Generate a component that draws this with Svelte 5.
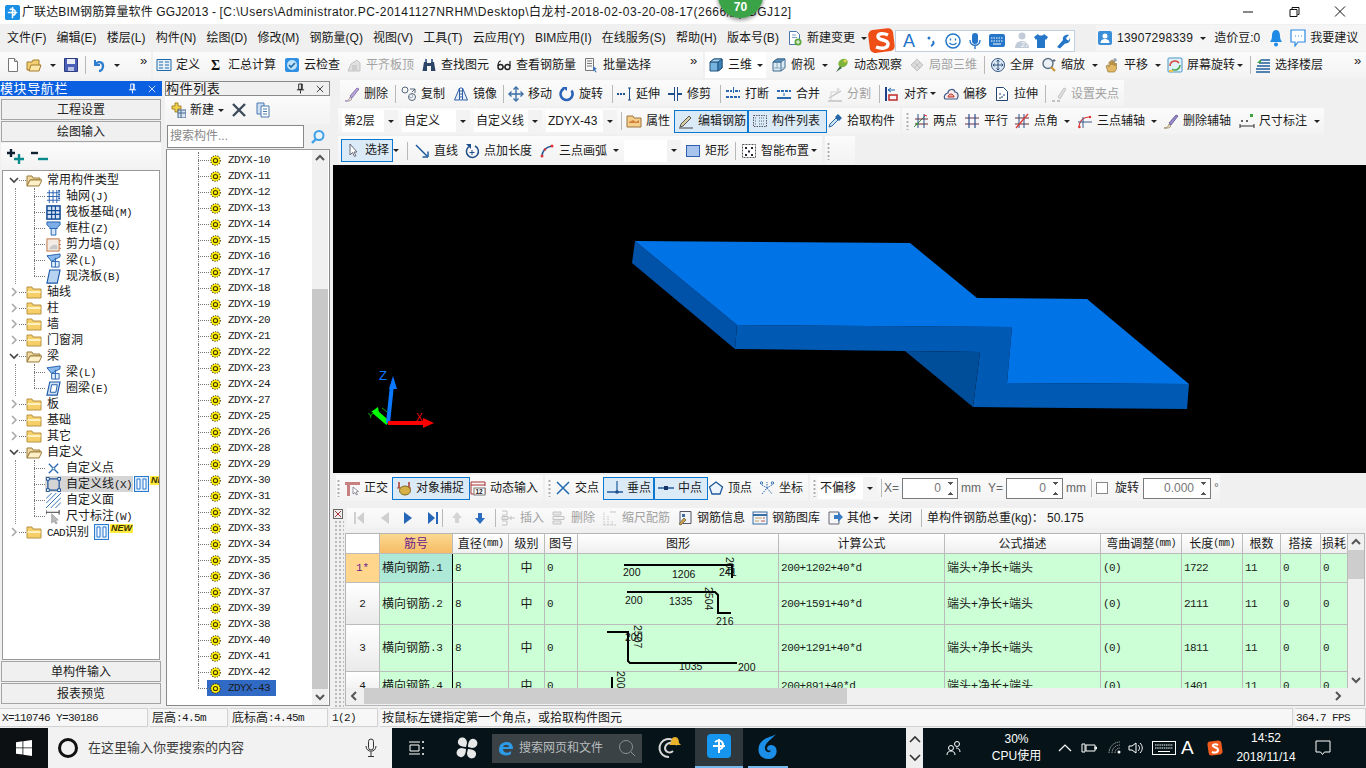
<script>
  // icon bodies, 16x16
  const ic = {
    new: '<path d="M3.500 1.500h6l3 3v10h-9z" fill="#fff" stroke="#777"/><path d="M9.500 1.500v3h3" fill="#ddd" stroke="#777"/>',
    open: '<path d="M1 5h5l1-2h6v10H1z" fill="#f3cf74" stroke="#a57c2a"/><path d="M3 14l2-6h10l-2 6z" fill="#fbe6a8" stroke="#a57c2a"/>',
    save: '<path d="M1.500 1.500h13v13h-13z" fill="#4a5fb5" stroke="#2c3a80"/><path d="M4 2h8v5H4z" fill="#e8ecf8"/><path d="M5 10h6v4H5z" fill="#b8c2e4"/>',
    undo: '<path d="M4 3v5h5" fill="none" stroke="#2f7fd0" stroke-width="2"/><path d="M4 8c2-4 8-4 8 1 0 3-2 5-4 5" fill="none" stroke="#2f7fd0" stroke-width="2.400"/>',
    def: '<path d="M1 2.500h14v11H1z" fill="#e6f0fb" stroke="#1f6aa8"/><path d="M3 5h4M3 8h4M3 11h4M9 5h4M9 8h4M9 11h4" stroke="#1f6aa8"/>',
    sum: '<text x="3" y="13" font-size="14" font-weight="700" font-family="Liberation Serif" fill="#111">Σ</text>',
    cloud: '<rect x="1" y="1" width="14" height="14" rx="2" fill="#2f8fe0"/><circle cx="8" cy="8" r="5" fill="#bfe2fb"/><path d="M5 8l2 2 4-4" fill="none" stroke="#1f6aa8" stroke-width="1.600"/>',
    flat: '<path d="M2 14l3-7 6-4 3 3v8z" fill="#ddd" stroke="#bbb"/><path d="M6 8h5v6H6z" fill="#c8c8c8"/>',
    find: '<path d="M3 5h3v9H1.500zM10 5h3l1.500 9H10z" fill="#2c4468"/><path d="M4 2h2v3H4zM10 2h2v3h-2z" fill="#53739d"/><path d="M6 6h4v3H6z" fill="#2c4468"/>',
    see: '<circle cx="4.500" cy="10" r="2.500" fill="none" stroke="#222" stroke-width="1.400"/><circle cx="11.500" cy="10" r="2.500" fill="none" stroke="#222" stroke-width="1.400"/><path d="M7 10h2M2 9c0-3 1-5 3-5M14 9V4" stroke="#222" fill="none" stroke-width="1.200"/>',
    batch: '<path d="M2.500 1.500h8v12h-8z" fill="#f6f6f6" stroke="#777"/><path d="M4 4h5M4 6.500h5M4 9h5" stroke="#777"/><path d="M10 9l4 3-2 .5 1.500 2.500-1 .5-1.500-2.500-1 1.500z" fill="#3c6eb4"/>',
    cube: '<path d="M2 5l4-3h8v9l-4 3H2z" fill="#75b4df" stroke="#24557f"/><path d="M2 5h8v9" fill="none" stroke="#24557f"/><path d="M10 5l4-3v9l-4 3z" fill="#3d85b9" stroke="#24557f"/><path d="M2 5l4-3h8l-4 3z" fill="#a8d3ee" stroke="#24557f"/>',
    top: '<path d="M2 5l4-3h8v9l-4 3H2z" fill="#dceaf4" stroke="#3c6a90"/><path d="M2 5h8v9" fill="none" stroke="#3c6a90"/><path d="M6 2v9H2M6 11l8 0" fill="none" stroke="#8ab"/><path d="M2 5l4-3h8l-4 3z" fill="#5f93bb" stroke="#3c6a90"/>',
    orbit: '<ellipse cx="9" cy="6" rx="5" ry="4" fill="#7fb43c" transform="rotate(-35 9 6)"/><path d="M2 15l4-6 2 2z" fill="#3c6a4a"/><circle cx="11" cy="4" r="1.500" fill="#e9d64e"/>',
    local: '<path d="M2 8l6-6 6 6-6 6z" fill="#d6d6d6" stroke="#bbb"/><path d="M5 5l6 6M8 2v0M11 5l-6 6" stroke="#bbb"/>',
    full: '<circle cx="8" cy="8" r="6.500" fill="#dce8f7" stroke="#33557d"/><path d="M8 3v10M3 8h10" stroke="#33557d"/><path d="M6.500 4.500L8 3l1.500 1.500M6.500 11.500L8 13l1.500-1.500M4.500 6.500L3 8l1.500 1.500M11.500 6.500L13 8l-1.500 1.500" fill="none" stroke="#33557d"/>',
    zoom: '<circle cx="7" cy="6.500" r="5" fill="#eaf0f6" stroke="#5b6f86" stroke-width="1.400"/><path d="M10 10l4 4" stroke="#c99a3a" stroke-width="2.400"/><path d="M13 2v3M11.500 3.500h3" stroke="#567"/>',
    pan: '<path d="M4 15l-2-6 2-1 1 2V5l1.500-.5L7 8V3.500L8.500 3 9 8V4.500L10.500 4.500 11 9V6.500l1.500 0V12l-2 3z" fill="#e2b766" stroke="#8a6a2a" stroke-width=".6"/><path d="M11 1v4M9 3h4" stroke="#789"/>',
    rot: '<rect x="1" y="1" width="14" height="14" rx="1" fill="#dff1fb" stroke="#4e94c6"/><path d="M3 9a5 5 0 0 1 9-3" fill="none" stroke="#d8473a" stroke-width="1.500"/><path d="M13 8a5 5 0 0 1-8 4" fill="none" stroke="#48a848" stroke-width="1.500"/><path d="M2 13h4v2H2z" fill="#f0c24c"/>',
    floor: '<path d="M6 3h9M4 6h11M2 9h13M1 12h14M1 15h14" stroke="#1e5e9c" stroke-width="1.600"/><path d="M6 2L2 6l4 0" fill="#3c9e4a"/>',
    del: '<path d="M1 15c3 0 4-1 5-4l2 2c-1 2-4 2.500-7 2z" fill="#e8e0c8" stroke="#7c6a9a" stroke-width=".6"/><path d="M6 10l7-8 2 1-7 9z" fill="#b9a5d8" stroke="#6a5598" stroke-width=".7"/>',
    copy: '<circle cx="4" cy="4" r="3" fill="none" stroke="#55657a"/><circle cx="11" cy="11" r="3.500" fill="none" stroke="#55657a"/><circle cx="10" cy="10" r="1.800" fill="none" stroke="#9ab"/><path d="M9 3h5v4M14 3l-3 3" fill="none" stroke="#55657a"/>',
    mirror: '<path d="M6.500 2L1.500 14h5zM9.500 2l5 12h-5z" fill="#e6eef9" stroke="#2f60a8"/><path d="M8 1v14" stroke="#2f60a8" stroke-dasharray="2 1"/>',
    move: '<path d="M8 1v14M1 8h14" stroke="#3a6ea5" stroke-width="1.400"/><path d="M5.500 3.500L8 1l2.500 2.500M5.500 12.500L8 15l2.500-2.500M3.500 5.500L1 8l2.500 2.500M12.500 5.500L15 8l-2.500 2.500" fill="none" stroke="#3a6ea5" stroke-width="1.400"/>',
    rotate: '<path d="M12.500 4.500A6 6 0 1 1 5 2.500" fill="none" stroke="#2a62b8" stroke-width="2.600"/><path d="M3 1h5v4z" fill="#2a62b8"/>',
    extend: '<path d="M1 8h9" stroke="#1f4f8a" stroke-dasharray="2 1" stroke-width="2"/><path d="M12 2h3M12 14h3M13.500 2v12" stroke="#1f4f8a"/>',
    trim: '<path d="M1 8h6M10 8h5" stroke="#1f4f8a" stroke-width="2"/><path d="M7.500 1v14M10.500 1v14" stroke="#1f4f8a"/>',
    break: '<path d="M1 5h6M10 5h5M1 11h14" stroke="#2a6ab0" stroke-width="2" stroke-dasharray="3 1"/><path d="M8.500 1v6" stroke="#2a6ab0"/>',
    merge: '<path d="M1 5h14" stroke="#2a6ab0" stroke-width="2" stroke-dasharray="3 1"/><path d="M1 12h14" stroke="#2a6ab0" stroke-width="2"/><path d="M8 7v3" stroke="#2a6ab0"/>',
    split: '<path d="M1 15h14M2 12l12-7" stroke="#bbb" stroke-width="1.400"/><path d="M4 14V6h8" fill="none" stroke="#ccc"/><path d="M10 2l3 1-3 4z" fill="#d4d4d4"/>',
    align: '<path d="M2 1v14" stroke="#1f3f8a" stroke-width="2"/><path d="M5 9h8v5H5z" fill="none" stroke="#c0282a" stroke-width="1.500"/><path d="M4 4h7M4 4l3-2M4 4l3 2" stroke="#1f6ab0" fill="none"/>',
    offset: '<path d="M2 13c-2-3 1-6 3-6 0-4 6-5 7-1 3 0 4 4 2 7z" fill="#fbeaea" stroke="#3b5a8a" stroke-width="1.200"/><path d="M5 11c0-2 2-3 3-3s3 1 3 3z" fill="#e9a7a0" stroke="#c0392b"/>',
    stretch: '<path d="M2.500 1.500h7l4 4v9h-11z" fill="#fff" stroke="#25456e"/><path d="M6 7v2M8 10v2M10 8v2M5 12h2" stroke="#25456e"/>',
    grip2: '<path d="M1 15h3M6 15h3" stroke="#bbb" stroke-width="2"/><path d="M7 11l6-9 2 1-6 10z" fill="#ddd" stroke="#bbb"/>',
    attr: '<path d="M1 3h6l1 2h7v9H1z" fill="#f3cf8b" stroke="#a0743a"/><path d="M3 9l4-2 3 2 3-2v3H3z" fill="#d2803c"/>',
    edit: '<path d="M2 14l1-3 8-8 2 2-8 8z" fill="#d9d0a8" stroke="#555"/><path d="M1 15h14" stroke="#444"/>',
    list: '<path d="M1.500 2.500h13v11h-13z" fill="none" stroke="#556" stroke-dasharray="1.500 1"/><path d="M3 5h2M3 8h2M3 11h2M7 5h6M7 8h6M7 11h6" stroke="#567" stroke-dasharray="1 1"/>',
    pick: '<path d="M2 14l1-3 6-6 2 2-6 6z" fill="#cfe4f6" stroke="#2868a8"/><path d="M8 4l3-3 4 4-3 3z" fill="#2868a8"/>',
    two: '<path d="M1 14L13 2" stroke="#3c9040"/><path d="M2 6h13M2 11h13" stroke="#6a2f2f"/><path d="M5 1v14M11 1v14" stroke="#2a4f8a"/><circle cx="4" cy="11" r="1.300" fill="#3c9040"/><path d="M11 2l3 1" stroke="#d33"/>',
    para: '<path d="M1 5h14M1 11h14" stroke="#6a2f4f" stroke-width="1.200"/><path d="M5 1v14M11 1v14" stroke="#2a4f8a" stroke-width="1.200"/>',
    ang: '<path d="M1 5h14M1 11h14" stroke="#6a2f2f"/><path d="M5 1v14M10 1v14" stroke="#2a4f8a"/><path d="M2 15L14 1" stroke="#d33" stroke-width="1.200"/>',
    arc3: '<path d="M2 15c0-7 4-11 11-11" fill="none" stroke="#d33" stroke-width="1.200"/><path d="M6 15V4M1 9h14" stroke="#3a5a8a"/><circle cx="2.500" cy="14" r="1.200" fill="#d33"/><circle cx="13" cy="4" r="1.200" fill="#d33"/>',
    delax: '<path d="M1 15c3 0 4-1 5-4l2 2c-1 2-4 2.500-7 2z" fill="#e8e0c8" stroke="#7c6a3a" stroke-width=".6"/><path d="M6 10l7-8 2 1-7 9z" fill="#9a8cc8" stroke="#4a3f88" stroke-width=".7"/>',
    dim: '<path d="M1 11v4M15 11v4M1 13h14" stroke="#333"/><circle cx="3" cy="8" r="1" fill="#333"/><circle cx="8" cy="8" r="1" fill="#333"/><rect x="11" y="1" width="3" height="3" fill="#3ba53b"/>',
    sel: '<path d="M5 2v11l2.500-2.500 2 4 1.500-.8-2-3.700H12z" fill="#fff" stroke="#667"/>',
    line: '<path d="M2 2l11 11" stroke="#1f5a9c" stroke-width="1.500"/><path d="M14 14H8.500M14 14V8.500" stroke="#1f5a9c" stroke-width="1.500"/>',
    ptlen: '<path d="M11 3a6 6 0 1 1-6 .5" fill="none" stroke="#1f4f8a" stroke-width="1.500"/><path d="M2 1h5v5z" fill="#1f4f8a"/><path d="M8 7v5M5.500 9.500h5" stroke="#1f4f8a"/>',
    arc: '<path d="M3 14c0-6 4-10 10-11" fill="none" stroke="#1f5a9c" stroke-width="1.500"/><circle cx="3" cy="13" r="1.500" fill="#d33"/><circle cx="13" cy="3" r="1.500" fill="#d33"/><circle cx="6" cy="6.500" r="1.200" fill="#d33"/>',
    rect: '<rect x="1.500" y="2.500" width="13" height="11" fill="#a9c4ec" stroke="#2e5fb0"/>',
    smart: '<path d="M1.500 1.500h13v13h-13z" fill="#fff" stroke="#555" stroke-dasharray="2 1"/><path d="M4 4h2v2H4zM10 4h2v2h-2zM7 7.500h2v2H7zM4 11h2v2H4zM10 11h2v2h-2z" fill="#223"/>',
    ortho: '<path d="M1 2h15v3H1z" fill="#c98080"/><path d="M3 4h3v12H3z" fill="#c98080"/><path d="M9 7v7l2-1.500 1.500 2.500 1-.5-1.500-2.500 2.500-.5z" fill="#fff" stroke="#667" stroke-width=".7"/>',
    snap: '<path d="M1 8h14" stroke="#b03a2a"/><path d="M3 2v6M13 2v6" stroke="#b03a2a" stroke-width="1.500"/><ellipse cx="9" cy="10.500" rx="5.500" ry="4.500" fill="#d6b048" stroke="#806a20"/>',
    dyn: '<path d="M1 2h14v4M1 2v12h14V8" fill="none" stroke="#a33"/><path d="M1 5h14" stroke="#a33"/><rect x="4" y="8" width="11" height="7" fill="#fff" stroke="#777"/><text x="5.500" y="14" font-size="6.500" font-family="Liberation Sans" font-weight="700" fill="#222">12</text>',
    cross: '<path d="M2 2l12 12M14 2L2 14" stroke="#1f6ab0" stroke-width="1.500"/>',
    perp: '<path d="M0 12h16" stroke="#1f5a9c" stroke-width="1.500"/><path d="M10 1v11" stroke="#1f5a9c" stroke-width="1.200"/><circle cx="10" cy="12" r="1.800" fill="#1f4f8a"/>',
    mid: '<path d="M0 8h16" stroke="#1f5a9c" stroke-width="1.500"/><rect x="6" y="6" width="4" height="4" fill="#14366a"/>',
    vert: '<path d="M8 2l6.500 5-2.500 7H4L1.500 7z" fill="#eef4fc" stroke="#1f5a9c" stroke-width="1.300"/>',
    coord: '<path d="M3 14l5-6 5 6M8 8V2M3 5l5 3 5-3" fill="none" stroke="#2a6ab0" stroke-dasharray="1.500 1"/><circle cx="2.500" cy="3" r="1.200" fill="none" stroke="#2a6ab0"/><circle cx="13.500" cy="3" r="1.200" fill="none" stroke="#2a6ab0"/>',
    first: '<path d="M3 2h2v12H3zM13 2v12L6 8z" fill="#c8c8c8"/>',
    prev: '<path d="M12 2v12L4 8z" fill="#c8c8c8"/>',
    next: '<path d="M4 2v12l8-6z" fill="#2566b8"/>',
    last: '<path d="M11 2h2v12h-2zM3 2v12l7-6z" fill="#2566b8"/>',
    up: '<path d="M8 2l5 6h-3v5H6V8H3z" fill="#cfcfcf"/>',
    down: '<path d="M8 14l5-6h-3V3H6v5H3z" fill="#2e6ec0"/>',
    ins: '<path d="M2 1h5v4H2M2 11h5v4H2" fill="none" stroke="#bbb"/><path d="M7 8h8M11 6v4" stroke="#bbb"/><path d="M2 6.500h6v3H2z" fill="#e4e4e4" stroke="#bbb"/>',
    delr: '<path d="M2 2h8v3H2zM2 11h8v3H2z" fill="#e8e8e8" stroke="#bbb"/><path d="M2 6.500h11v3H2z" fill="#f2f2f2" stroke="#bbb"/>',
    scale: '<path d="M2 15V2M6 15V5M10 15v-4M14 15h-13" stroke="#bbb" stroke-dasharray="1.500 1"/><path d="M8 2h6" stroke="#bbb"/>',
    info: '<path d="M3 1.500h11v12H3z" fill="#f0f3f7" stroke="#556"/><path d="M5 4h3v3H5z" fill="#446a9a"/><path d="M2 14l5-6 2 2-5 5z" fill="#d6a248" stroke="#775"/>',
    lib: '<rect x="1" y="2" width="14" height="12" fill="#eef3f9" stroke="#3a6ea5"/><path d="M1 5h14" stroke="#3a6ea5" stroke-width="2"/><path d="M3 8h7M3 11h4" stroke="#c9a35a"/><path d="M11 8h2M9 11h4" stroke="#c05a4a"/>',
    other: '<path d="M2 2h10v12H2z" fill="#f5f5f5" stroke="#667"/><path d="M7 5h4V2l5 5-5 5V9H7z" fill="#3a7cc4"/>',
    user: '<rect x="1" y="1" width="14" height="14" rx="2" fill="#3a8fd8"/><circle cx="8" cy="6" r="2.500" fill="#fff"/><path d="M3.500 13c0-3 2-4 4.500-4s4.500 1 4.500 4z" fill="#fff"/>',
    change: '<path d="M2.500 1.500h7l3 3v10h-10z" fill="#fff" stroke="#4a78ac"/><path d="M5 5h4M5 7.500h5" stroke="#7a9cc4"/><circle cx="11" cy="12" r="3.500" fill="#5ca83c"/><path d="M9 12h4M11 10v4" stroke="#fff"/>',
    newitem: '<path d="M5 1h3v3h3v3H8v3H5V7H2V4h3z" fill="#f1d04a" stroke="#a8842a"/><rect x="8" y="8" width="8" height="8" fill="#d7e3f2" stroke="#44668e"/><path d="M8 11h8M11 8v8" stroke="#44668e"/>',
    xdel: '<path d="M2 2l12 12M14 2L2 14" stroke="#3c4a5a" stroke-width="2.400"/>',
    dupe: '<path d="M2 1h7v11H2z" fill="#cfe0f4" stroke="#4a78b0"/><path d="M6 4h8v11H6z" fill="#fff" stroke="#4a78b0"/><path d="M8 7h4M8 9.500h4M8 12h4" stroke="#4a78b0"/>'
  };

  const treeIcons = {
    grid: '<path d="M1 4h14M1 8h14M1 12h14M3.500 1v14M7.500 1v14M11.500 1v14" stroke="#2860b0" fill="none"/><path d="M13 1h2v2h-2zM13 5h2v2h-2zM13 9h2v2h-2z" fill="#2860b0"/>',
    raft: '<rect x="1" y="1" width="14" height="14" fill="#d5e4f6" stroke="#124a94" stroke-width="1.600"/><path d="M1 6h14M1 10h14M6 1v14M10 1v14" stroke="#124a94" stroke-width="1.200"/>',
    col: '<path d="M1 1h14v3l-3 3v1H4V7L1 4z" fill="#7eaee6" stroke="#2060b0"/><path d="M5.500 8h5v7h-5z" fill="#d5e6f8" stroke="#2060b0"/>',
    wall: '<rect x="1" y="2" width="13" height="13" fill="#f3ebe4" stroke="#c0703a"/><path d="M3 13c2-4 6-6 9-4v4z" fill="#c8c8c8"/><path d="M14 4h2M14 8h2M14 12h2" stroke="#c0703a"/>',
    beam: '<path d="M1 3l14-2v3L6 9z" fill="#8ab8ea" stroke="#2060b0"/><path d="M6 9h8v6H6z" fill="#e2eefa" stroke="#2060b0"/><path d="M10 5v10" stroke="#2060b0"/>',
    slab: '<path d="M4 1h11l-3 14H1z" fill="#b7d3f2" stroke="#1a56a8" stroke-width="1.200"/>',
    ring: '<path d="M4 1h11l-3 14H1z" fill="#cfe2f6" stroke="#1a56a8" stroke-width="1.200"/><path d="M6 4h6l-1.500 8H4.500z" fill="#fff" stroke="#1a56a8"/>',
    pt: '<path d="M3 3l10 10M13 3L3 13" stroke="#2a6ab0" stroke-width="1.400"/><circle cx="8" cy="8" r="1.300" fill="#fff" stroke="#2a6ab0"/>',
    lineb: '<rect x="2" y="2" width="12" height="12" fill="none" stroke="#124a94" stroke-width="1.200"/><path d="M.5 .5h3v3h-3zM12.500 .5h3v3h-3zM.5 12.500h3v3h-3zM12.500 12.500h3v3h-3z" fill="#fff" stroke="#124a94"/>',
    face: '<path d="M0 6L6 0M0 11L11 0M0 16L16 0M5 16L16 5M10 16l6-6" stroke="#2a6ab0"/>',
    dimt: '<path d="M0 1v5M14 1v5M0 3.500h14" stroke="#333"/><path d="M6 5v10l2.500-2 2 3 1.500-.8-2-3 3-.5z" fill="#bbb" stroke="#888" stroke-width=".6"/>'
  };

  // toolbar helpers: every item starts at a page x, widths follow from that
  function bar(x0, x1, items, cls = '') {
    return {
      x0, x1, cls,
      items: items.map((it, i) => ({
        ic: it[1], t: it[2], f: it[3] || '',
        w: (i + 1 < items.length ? items[i + 1][0] : x1) - it[0]
      })),
      pad: items[0][0] - x0
    };
  }
  const spaced = (bars, base) => {
    let at = base;
    return bars.map((b) => {
      const m = b.x0 - at;
      at = b.x1;
      return { ...b, m };
    });
  };

  const row1 = spaced([
    bar(0, 151, [[5,'new'],[26,'open'],[50,'caret'],[63,'save'],[85,'sep'],[91,'undo'],[114,'caret'],[140,'more']]),
    bar(153, 703, [[156,'def','定义'],[208,'sum','汇总计算'],[284,'cloud','云检查'],[346,'flat','平齐板顶','off'],[421,'find','查找图元'],[496,'see','查看钢筋量'],[583,'batch','批量选择'],[690,'more']]),
    bar(705, 766, [[708,'cube','三维'],[757,'caret']], 'white'),
    bar(766, 1366, [[771,'top','俯视'],[822,'caret'],[834,'orbit','动态观察'],[909,'local','局部三维','off'],[984,'sep'],[990,'full','全屏'],[1041,'zoom','缩放'],[1092,'caret'],[1104,'pan','平移'],[1155,'caret'],[1167,'rot','屏幕旋转'],[1237,'caret'],[1250,'sep'],[1255,'floor','选择楼层'],[1354,'more']])
  ], 0);

  const row2 = spaced([
    bar(340, 1124, [[344,'del','删除'],[395,'sep'],[401,'copy','复制'],[453,'mirror','镜像'],[503,'sep'],[508,'move','移动'],[559,'rotate','旋转'],[612,'sep'],[616,'extend','延伸'],[667,'trim','修剪'],[720,'sep'],[725,'break','打断'],[776,'merge','合并'],[827,'split','分割','off'],[879,'sep'],[884,'align','对齐'],[930,'caret'],[943,'offset','偏移'],[994,'stretch','拉伸'],[1045,'sep'],[1051,'grip2','设置夹点','off']])
  ], 333);

  const row3 = spaced([
    bar(338, 900, [[342,'combo','第2层'],[402,'combo','自定义'],[474,'combo','自定义线'],[546,'combo','ZDYX-43'],[621,'sep'],[626,'attr','属性'],[674,'edit','编辑钢筋','on'],[748,'list','构件列表','on'],[827,'pick','拾取构件']]),
    bar(902, 1324, [[906,'grip'],[913,'two','两点'],[964,'para','平行'],[1014,'ang','点角'],[1064,'caret'],[1077,'arc3','三点辅轴'],[1151,'caret'],[1163,'delax','删除辅轴'],[1239,'dim','尺寸标注'],[1314,'caret']])
  ], 333);

  const row4 = spaced([
    bar(338, 822, [[341,'sel','选择','on'],[393,'caret'],[407,'sep'],[414,'line','直线'],[464,'ptlen','点加长度'],[539,'arc','三点画弧'],[613,'caret'],[624,'combo',''],[685,'rect','矩形'],[735,'sep'],[741,'smart','智能布置'],[811,'caret']]),
    bar(825, 855, [[827,'grip']])
  ], 333);

  const row5 = spaced([
    bar(336, 543, [[337,'grip'],[344,'ortho','正交'],[392,'snap','对象捕捉','on'],[470,'dyn','动态输入']]),
    bar(545, 808, [[548,'grip'],[555,'cross','交点'],[603,'perp','垂点','on'],[654,'mid','中点','on'],[708,'vert','顶点'],[759,'coord','坐标']]),
    bar(810, 1220, [[813,'grip'],[818,'combo','不偏移'],[881,'sep'],[884,null,'X=','soft'],[902,'spin','0'],[961,null,'mm','soft'],[988,null,'Y=','soft'],[1006,'spin','0'],[1066,null,'mm','soft'],[1091,'sep'],[1096,'check'],[1115,null,'旋转'],[1143,'spin','0.000'],[1214,null,'°','soft']])
  ], 333);

  const row6 = spaced([
    bar(347, 1366, [[351,'first',null,'off'],[377,'prev',null,'off'],[400,'next'],[425,'last'],[442,'sep'],[449,'up',null,'off'],[472,'down'],[495,'sep'],[500,'ins','插入','off'],[551,'delr','删除','off'],[602,'scale','缩尺配筋','off'],[677,'info','钢筋信息'],[752,'lib','钢筋图库'],[827,'other','其他'],[873,'caret'],[888,null,'关闭'],[921,'sep'],[927,null,'单构件钢筋总重(kg)： 50.175']])
  ], 345);

  const menus = ['文件(F)','编辑(E)','楼层(L)','构件(N)','绘图(D)','修改(M)','钢筋量(Q)','视图(V)','工具(T)','云应用(Y)','BIM应用(I)','在线服务(S)','帮助(H)','版本号(B)'];

  const tree = [
    { name: '常用构件类型', open: true, kids: [['grid','轴网','(J)'],['raft','筏板基础','(M)'],['col','框柱','(Z)'],['wall','剪力墙','(Q)'],['beam','梁','(L)'],['slab','现浇板','(B)']] },
    { name: '轴线' }, { name: '柱' }, { name: '墙' }, { name: '门窗洞' },
    { name: '梁', open: true, kids: [['beam','梁','(L)'],['ring','圈梁','(E)']] },
    { name: '板' }, { name: '基础' }, { name: '其它' },
    { name: '自定义', open: true, kids: [['pt','自定义点',''],['lineb','自定义线','(X)','sel'],['face','自定义面',''],['dimt','尺寸标注','(W)']] },
    { name: '识别', pre: 'CAD', badge: true }
  ];

  const zdyx = [10,11,12,13,14,15,16,17,18,19,20,21,22,23,24,27,25,26,28,29,30,31,32,33,34,35,36,37,39,38,40,41,42,43];

  const cols = ['筋号','直径(mm)','级别','图号','图形','计算公式','公式描述','弯曲调整(mm)','长度(mm)','根数','搭接','损耗'];
  const rows = [
    { n: '1*', name: '横向钢筋.1', f: '200+1202+40*d', len: 1722, cur: true, h: 'r1' },
    { n: '2', name: '横向钢筋.2', f: '200+1591+40*d', len: 2111, h: 'r2' },
    { n: '3', name: '横向钢筋.3', f: '200+1291+40*d', len: 1811, h: 'r3' },
    { n: '4', name: '横向钢筋.4', f: '200+891+40*d', len: 1401, h: 'r4' }
  ];
</script>

{#snippet icon(name)}
  <svg class="ico" viewBox="0 0 16 16">{@html ic[name]}</svg>
{/snippet}

{#snippet pinx()}
  <svg class="pin" viewBox="0 0 10 12"><path d="M3 1h4v6H3zM6 1v6M1 7.500h8M5 8v3.500" fill="none" stroke="currentColor"/></svg>
  <svg class="x" viewBox="0 0 10 10"><path d="M1 1l8 8M9 1L1 9" stroke="currentColor"/></svg>
{/snippet}

{#snippet toolbar(bars, cls)}
  <div class="tbrow {cls}">
    {#each bars as b}
      <div class="bar {b.cls}" style="width:{b.x1 - b.x0}px;margin-left:{b.m}px;padding-left:{b.pad}px">
        {#each b.items as it}
          {#if it.ic === 'sep'}
            <span class="cell" style="width:{it.w}px"><i class="sep"></i></span>
          {:else if it.ic === 'caret'}
            <span class="cell" style="width:{it.w}px"><i class="caret"></i></span>
          {:else if it.ic === 'more'}
            <span class="cell more" style="width:{it.w}px">»</span>
          {:else if it.ic === 'grip'}
            <span class="cell" style="width:{it.w}px"><i class="grip"></i></span>
          {:else if it.ic === 'check'}
            <span class="cell" style="width:{it.w}px"><i class="check"></i></span>
          {:else if it.ic === 'combo'}
            <span class="cell" style="width:{it.w}px">
              <span class="combo" style="width:{it.w - 4}px"><span>{it.t}</span><i class="caret"></i></span>
            </span>
          {:else if it.ic === 'spin'}
            <span class="cell" style="width:{it.w}px">
              <span class="spin" style="width:{it.w - 3}px"><span>{it.t}</span><i class="arrows"></i></span>
            </span>
          {:else}
            <span class="cell item {it.f}" style="width:{it.w}px">
              {#if it.ic}{@render icon(it.ic)}{/if}
              {#if it.t}<span class="lbl">{it.t}</span>{/if}
            </span>
          {/if}
        {/each}
      </div>
    {/each}
  </div>
{/snippet}

<div class="app">
  <header class="title">
    <svg class="appico" viewBox="0 0 16 16"><rect width="16" height="16" rx="2" fill="#1a8fe6"/><path d="M8 2v12M3 8h10M5 5c3-2 6 0 6 3s-3 3-3 3" fill="none" stroke="#fff" stroke-width="1.600"/></svg>
    <span class="title-text">广联达BIM钢筋算量软件 GGJ2013 - <span class="title-path">[C:\Users\Administrator.PC-20141127NRHM\Desktop\白龙村-2018-02-03-20-08-17(2666版).GGJ12]</span></span>
    <span class="winbtns">
      <svg width="46" height="24" viewBox="0 0 46 24"><path d="M18 12h10" stroke="#111"/></svg>
      <svg width="46" height="24" viewBox="0 0 46 24"><path d="M19 9.500h7v7h-7zM21 9V7.500h7v7h-1.500" fill="none" stroke="#111"/></svg>
      <svg width="46" height="24" viewBox="0 0 46 24"><path d="M18 6.500l10 10M28 6.500l-10 10" stroke="#111"/></svg>
    </span>
  </header>

  <nav class="menubar">
    {#each menus as m}<span class="menu">{m}</span>{/each}
    <span class="menu-change">{@render icon('change')}<span>新建变更</span><i class="caret"></i></span>
    <span class="menu-blank"></span>
    <span class="acct">
      {@render icon('user')}
      <span class="phone">13907298339</span><i class="caret"></i>
      <span class="beans">造价豆:0</span>
      <svg class="bell" viewBox="0 0 14 18"><path d="M7 1c3 0 4 3 4 6 0 3 1 4 2 6H1c1-2 2-3 2-6 0-3 1-6 4-6z" fill="#1e8ae6"/><circle cx="7" cy="15.500" r="2" fill="#1e8ae6"/></svg>
      <svg class="chat" viewBox="0 0 16 18"><path d="M1 1h14v12H8l-3 4v-4H1z" fill="#fff" stroke="#2a8ae0" stroke-width="1.200"/><path d="M5 7h1M8 7h1M11 7h1" stroke="#2a8ae0"/></svg>
      <span>我要建议</span>
    </span>
  </nav>

  {@render toolbar(row1, 'top')}

  <main class="main">
    <aside class="nav">
      <div class="panehead blue"><span>模块导航栏</span>{@render pinx()}</div>
      <button class="navbtn first">工程设置</button>
      <button class="navbtn">绘图输入</button>
      <div class="expbar">
        <svg width="18" height="18" viewBox="0 0 18 18"><path d="M4 1v8M0 5h8" stroke="#123" stroke-width="2.400"/><path d="M12 6v10M7 11h10" stroke="#0a8a8a" stroke-width="2.400"/></svg>
        <svg width="18" height="14" viewBox="0 0 18 14"><path d="M0 3h7" stroke="#123" stroke-width="2.400"/><path d="M7 9h10" stroke="#0a8a8a" stroke-width="2.400"/></svg>
      </div>
      <div class="tree">
        {#each tree as g}
          <div class="node">
            <svg class="chev" viewBox="0 0 10 10">
              {#if g.open}<path d="M1 3l4 4 4-4" fill="none" stroke="#444" stroke-width="1.600"/>{:else}<path d="M3 1l4 4-4 4" fill="none" stroke="#aaa" stroke-width="1.600"/>{/if}
            </svg>
            <i class="hdots"></i>
            <svg class="folder" viewBox="0 0 16 13">
              {#if g.open}
                <path d="M1 2h5l1 2h7v2H4l-3 6z" fill="#f0d9a0" stroke="#9a7a3a"/><path d="M4 6h12l-3 6H1z" fill="#fdf0c8" stroke="#9a7a3a"/>
              {:else}
                <path d="M1 1h5l1 2h8v9H1z" fill="#f7cf6a" stroke="#b79440"/><path d="M1.500 5h13v2h-13z" fill="#fff1c0"/>
              {/if}
            </svg>
            <span class="nname">{#if g.pre}<span class="m">{g.pre}</span>{/if}{g.name}</span>
            {#if g.badge}
              <svg class="bk wide" viewBox="0 0 15 16"><rect x=".5" y=".5" width="14" height="15" fill="#dcecfb" stroke="#2a7ad0"/><path d="M3 3h3v10H3zM9 3h3v10H9z" fill="#fff" stroke="#2a7ad0"/></svg>
              <b class="new">NEW</b>
            {/if}
          </div>
          {#if g.kids}
            <div class="kids">
              {#each g.kids as k, i}
                <div class="kid">
                  <i class="elbow" class:last={i === g.kids.length - 1}></i>
                  <span class="kid-in" class:sel={k[3]}>
                    <svg class="kidico" viewBox="0 0 16 16">{@html treeIcons[k[0]]}</svg>
                    <span class="kname">{k[1]}<span class="m">{k[2]}</span></span>
                  </span>
                  {#if k[3]}
                    <svg class="bk" viewBox="0 0 15 16"><rect x=".5" y=".5" width="14" height="15" fill="#dcecfb" stroke="#2a7ad0"/><path d="M3 3h3v10H3zM9 3h3v10H9z" fill="#fff" stroke="#2a7ad0"/></svg>
                    <b class="new">NEW</b>
                  {/if}
                </div>
              {/each}
            </div>
          {/if}
        {/each}
      </div>
      <button class="navbtn b1">单构件输入</button>
      <button class="navbtn b2">报表预览</button>
    </aside>

    <section class="list">
      <div class="panehead"><span>构件列表</span>{@render pinx()}</div>
      <div class="listtools">
        {@render icon('newitem')}
        <span>新建</span><i class="caret"></i>
        <span class="xd">{@render icon('xdel')}</span>
        <span class="dp">{@render icon('dupe')}</span>
      </div>
      <div class="searchrow">
        <span class="search">搜索构件...</span>
        <svg class="mag" viewBox="0 0 16 16"><circle cx="9" cy="6.500" r="4.500" fill="#e6f3fd" stroke="#3fa0e8" stroke-width="2"/><path d="M6 10l-4 4" stroke="#3fa0e8" stroke-width="2.400"/></svg>
      </div>
      <div class="listbox">
        <div class="listrows">
          {#each zdyx as z, i}
            <div class="lrow">
              <i class="elbow" class:last={i === zdyx.length - 1}></i>
              <span class="lin" class:cur={z === 43}>
                <svg class="gear" viewBox="0 0 12 12"><circle cx="6" cy="6" r="5" fill="#ffee00"/><circle cx="6" cy="6" r="5.200" fill="none" stroke="#4a4200" stroke-width="1.200" stroke-dasharray="1.300 1.300"/><circle cx="6" cy="6" r="2.300" fill="none" stroke="#3a3400" stroke-width="1.100"/></svg>
                <span class="zd">ZDYX-{z}</span>
              </span>
            </div>
          {/each}
        </div>
        <div class="vscroll">
          <svg class="sarrow" viewBox="0 0 16 16"><path d="M4 10l4-4 4 4" fill="none" stroke="#555" stroke-width="2"/></svg>
          <div class="vspace"></div>
          <div class="vthumb"></div>
          <svg class="sarrow" viewBox="0 0 16 16"><path d="M4 6l4 4 4-4" fill="none" stroke="#555" stroke-width="2"/></svg>
        </div>
      </div>
    </section>

    <section class="work">
      {@render toolbar(row2, 'tb2')}
      {@render toolbar(row3, 'tb3')}
      {@render toolbar(row4, 'tb4')}

      <div class="view">
        <svg width="1033" height="308" viewBox="333 165 1033 308">
          <polygon points="632,263 635,241 737,325 735,349" fill="#0051a8"/>
          <polygon points="737,325 1012,327 1007,383 1189,384 1187,409 973,407 980,352 905,351 735,349" fill="#0059b3"/>
          <polygon points="905,351 980,352 973,407" fill="#004d99"/>
          <polygon points="635,241 910,243 977,298 1087,299 1189,384 1007,383 1012,327 737,325" fill="#0073e6"/>
          <path d="M388 423l-14-12" stroke="#00ff00" stroke-width="5"/>
          <path d="M371 412l7-5 1 6z" fill="#00ff00"/>
          <path d="M382 408l5 4" stroke="#00aa00"/>
          <path d="M388 423l4-38" stroke="#0a78ff" stroke-width="4"/>
          <path d="M393 376l4 13h-8z" fill="#0a78ff"/>
          <path d="M388 423h39" stroke="#ff0000" stroke-width="4"/>
          <path d="M434 423l-11-5v10z" fill="#ff0000"/>
          <text x="379" y="380" font-size="13" font-family="Liberation Sans" fill="#0a78ff">Z</text>
          <text x="416" y="421" font-size="10" font-family="Liberation Sans" fill="#ff0000">X</text>
          <text x="368" y="418" font-size="8" font-family="Liberation Sans" fill="#00d000">Y</text>
        </svg>
      </div>

      {@render toolbar(row5, 'tb5')}

      <div class="lower">
        <div class="dock">
          <svg width="10" height="10" viewBox="0 0 10 10"><rect x=".5" y=".5" width="9" height="9" fill="#eee" stroke="#666"/><path d="M2 2l6 6M8 2L2 8" stroke="#a33"/></svg>
          <i class="dockdots"></i>
        </div>
        <div class="lowermain">
          {@render toolbar(row6, 'tb6')}
          <div class="gridbox">
            <div class="gridtop">
              <div class="table">
                <div class="hcell corner"></div>
                {#each cols as c, i}
                  <div class="hcell" class:focus={i === 0}>
                    {#if c.includes('(')}{c.split('(')[0]}<span class="tiny">({c.split('(')[1]}</span>{:else}{c}{/if}
                  </div>
                {/each}

                {#each rows as r, ri}
                  <div class="rhead {r.h}" class:cur={r.cur}>{r.n}</div>
                  <div class="c rname {r.h}" class:sel={r.cur}>{r.name.split('.')[0]}<span class="m">.{r.name.split('.')[1]}</span></div>
                  <div class="c m {r.h}">8</div>
                  <div class="c mid {r.h}">中</div>
                  <div class="c m {r.h}">0</div>
                  <div class="c shape {r.h}">
                    {#if ri === 0}
                      <svg width="200" height="28" viewBox="578 554 200 28">
                        <path d="M624 565h108v13" fill="none" stroke="#000" stroke-width="2"/>
                        <text x="623" y="576">200</text><text x="672" y="578">1206</text>
                        <text transform="translate(726 571) rotate(90)" x="-14" y="0">200</text>
                        <text x="719" y="576">241</text>
                      </svg>
                    {:else if ri === 1}
                      <svg width="200" height="41" viewBox="578 583 200 41">
                        <path d="M627 592h88l3 3v18h13" fill="none" stroke="#000" stroke-width="2"/>
                        <text x="625" y="604">200</text><text x="669" y="605">1335</text>
                        <text transform="translate(705 587) rotate(90)">2504</text>
                        <text x="716" y="625">216</text>
                      </svg>
                    {:else if ri === 2}
                      <svg width="200" height="46" viewBox="578 625 200 46">
                        <path d="M607 632h21v29l2 2h107" fill="none" stroke="#000" stroke-width="2"/>
                        <text x="625" y="641">200</text>
                        <text transform="translate(634 625) rotate(90)">2507</text>
                        <text x="679" y="670">1035</text><text x="738" y="671">200</text>
                      </svg>
                    {:else}
                      <svg width="200" height="28" viewBox="578 672 200 28">
                        <path d="M612 677v23" fill="none" stroke="#000" stroke-width="2"/>
                        <text transform="translate(617 671) rotate(90)">200</text>
                      </svg>
                    {/if}
                  </div>
                  <div class="c m fm {r.h}">{r.f}</div>
                  <div class="c {r.h}">端头+净长+端头</div>
                  <div class="c m {r.h}">(0)</div>
                  <div class="c m {r.h}">{r.len}</div>
                  <div class="c m {r.h}">11</div>
                  <div class="c m {r.h}">0</div>
                  <div class="c m last {r.h}">0</div>
                {/each}
              </div>
              <div class="gv">
                <svg class="sarrow" viewBox="0 0 16 16"><path d="M4 10l4-4 4 4" fill="none" stroke="#555" stroke-width="2"/></svg>
                <div class="gthumb"></div>
                <div class="vspace"></div>
                <svg class="sarrow" viewBox="0 0 16 16"><path d="M4 6l4 4 4-4" fill="none" stroke="#555" stroke-width="2"/></svg>
              </div>
            </div>
            <div class="gh">
              <svg class="sarrow" viewBox="0 0 16 16"><path d="M10 4L6 8l4 4" fill="none" stroke="#555" stroke-width="2"/></svg>
              <div class="hthumb"></div>
              <div class="vspace"></div>
              <svg class="sarrow" viewBox="0 0 16 16"><path d="M6 4l4 4-4 4" fill="none" stroke="#555" stroke-width="2"/></svg>
            </div>
          </div>
        </div>
      </div>
    </section>
  </main>

  <footer class="status">
    <span class="st s1 m">X=110746 Y=30186</span>
    <span class="st s2">层高<span class="m">:4.5m</span></span>
    <span class="st s3">底标高<span class="m">:4.45m</span></span>
    <span class="st s4 m">1(2)</span>
    <span class="st s5">按鼠标左键指定第一个角点，或拾取构件图元</span>
    <span class="st s6 m">364.7 FPS</span>
  </footer>

  <div class="taskbar">
    <div class="tstart">
      <svg width="16" height="16" viewBox="0 0 16 16"><path d="M0 2.200l6.500-.9v6.200H0zM7.300 1.200L16 0v7.500H7.300zM0 8.300h6.500v6.300L0 13.800zM7.300 8.300H16V16l-8.700-1.200z" fill="#fff"/></svg>
    </div>
    <div class="tsearch">
      <svg width="22" height="22" viewBox="0 0 22 22"><circle cx="11" cy="11" r="8.500" fill="none" stroke="#111" stroke-width="3"/></svg>
      <span class="tsearch-t">在这里输入你要搜索的内容</span>
      <svg class="tmic" width="12" height="20" viewBox="0 0 12 20"><rect x="3.500" y="1" width="5" height="11" rx="2.500" fill="none" stroke="#333"/><path d="M1 8c0 7 10 7 10 0M6 14v4M3 18.500h6" fill="none" stroke="#333"/></svg>
    </div>
    <div class="tt tv">
      <svg width="18" height="18" viewBox="0 0 18 18"><path d="M1 3h11M1 15h11M2 6h9v6H2z" fill="none" stroke="#fff"/><path d="M15 2v2M15 8v2M15 14v2" stroke="#fff" stroke-width="1.500"/></svg>
    </div>
    <div class="tt fan">
      <svg width="24" height="24" viewBox="0 0 24 24" fill="#e8e8e8"><path d="M11 11C4 11 1 7 4 3c3-3 8-1 8 4zM13 11c0-7 4-10 8-7 3 3 1 8-4 8zM13 13c7 0 10 4 7 8-3 3-8 1-8-4zM11 13c0 7-4 10-8 7-3-3-1-8 4-8z"/></svg>
    </div>
    <div class="tbrowser">
      <svg width="18" height="18" viewBox="0 0 18 18"><path d="M2 11c0-6 4-8 8-8 4 0 6 3 6 7H6c0 4 5 5 8 2v3c-5 3-12 1-12-4zM6 8h6c0-3-5-3-6 0z" fill="#2e9be8"/></svg>
      <span>搜索网页和文件</span>
      <svg class="bmag" width="18" height="18" viewBox="0 0 18 18"><circle cx="8" cy="8" r="6.500" fill="none" stroke="#8a9296"/><path d="M13 13l4 4" stroke="#8a9296"/></svg>
    </div>
    <div class="tt spiral">
      <svg width="26" height="26" viewBox="0 0 26 26"><path d="M13 22a9 9 0 1 1 8-12c-3-4-11-3-12 3 0 4 5 6 8 3" fill="none" stroke="#d8d8d8" stroke-width="2"/><path d="M19 2c3 0 4 3 4 6l2 2h-12l2-2c0-3 1-6 4-6z" fill="#eab22c"/></svg>
    </div>
    <div class="tapp on">
      <svg width="24" height="26" viewBox="0 0 24 26"><rect width="24" height="24" rx="4" fill="#1696ee"/><path d="M12 5v14M6 12h12M8 8c4-3 8-1 8 3s-4 4-4 4" fill="none" stroke="#fff" stroke-width="2"/></svg>
    </div>
    <div class="tapp g">
      <svg width="24" height="28" viewBox="0 0 24 28"><path d="M20 1c-3 3-14 3-17 12-2 7 2 13 9 13 7 0 10-6 8-11-2-4-8-4-9 0 0 3 3 3 4 2-1 4-7 2-6-3 1-5 7-8 11-13z" fill="#1b8fe8"/></svg>
    </div>
    <div class="tscroll">
      <svg width="14" height="14" viewBox="0 0 14 14"><path d="M2 9l5-5 5 5" fill="none" stroke="#333" stroke-width="1.600"/></svg>
      <svg width="14" height="14" viewBox="0 0 14 14"><path d="M2 5l5 5 5-5" fill="none" stroke="#333" stroke-width="1.600"/></svg>
    </div>
    <div class="tt people">
      <svg width="16" height="16" viewBox="0 0 16 16"><circle cx="5" cy="8" r="2.500" fill="none" stroke="#fff"/><circle cx="11" cy="4" r="2.500" fill="none" stroke="#fff"/><path d="M1 15c0-3 2-4 4-4s4 1 4 4M10 8c2 0 4 1 4 4" fill="none" stroke="#fff"/></svg>
    </div>
    <div class="cpu"><span>30%</span><span>CPU使用</span></div>
    <div class="tray">
      <svg width="16" height="16" viewBox="0 0 16 16"><path d="M2 11l6-6 6 6" fill="none" stroke="#fff" stroke-width="1.200"/></svg>
      <svg class="t1" width="16" height="16" viewBox="0 0 16 16"><path d="M1 4h3v8H1zM5 5h9v6H5zM14 7h1.500v2H14z" fill="none" stroke="#fff"/></svg>
      <svg class="t2" width="16" height="16" viewBox="0 0 16 16"><path d="M2 13a11 11 0 0 1 11-11M5 13a8 8 0 0 1 8-8M8 13a5 5 0 0 1 5-5" fill="none" stroke="#aaa" stroke-dasharray="1.500 .8"/><circle cx="12" cy="12" r="1.500" fill="#fff"/></svg>
      <svg class="t3" width="16" height="16" viewBox="0 0 16 16"><path d="M1 6h3l4-3v10l-4-3H1z" fill="none" stroke="#fff"/><path d="M10 5c2 2 2 4 0 6M12 3c3 3 3 7 0 10" fill="none" stroke="#fff"/></svg>
      <svg class="t4" width="24" height="14" viewBox="0 0 24 14"><rect x=".5" y=".5" width="23" height="13" fill="none" stroke="#fff"/><path d="M3 4h18M3 7h18" stroke="#fff" stroke-dasharray="1.500 .7"/><path d="M6 10.500h12" stroke="#fff"/></svg>
      <span class="ta">A</span>
      <svg class="t5" width="16" height="18" viewBox="0 0 16 18"><rect x="1" y="2" width="14" height="14" rx="3" fill="#ef5a1e" transform="rotate(-8 8 9)"/><path d="M11 6c-2-1-6-1-5 1s5 1 5 4-4 3-6 2" fill="none" stroke="#fff" stroke-width="2"/></svg>
    </div>
    <div class="clock"><span>14:52</span><span>2018/11/14</span></div>
    <div class="notify">
      <svg width="16" height="16" viewBox="0 0 16 16"><path d="M1 1h14v11H9.500l-2 2.500-2-2.500H1z" fill="none" stroke="#fff"/></svg>
    </div>
  </div>

  <!-- floating over the window: desktop badge and the IME bar -->
  <div class="bubble"><span>70</span></div>
  <div class="ime">
    <svg class="imes" width="28" height="27" viewBox="0 0 28 27"><rect x="1" y="2" width="25" height="23" rx="5" fill="#ef4e16" transform="rotate(-7 14 14)"/><path d="M20 8c-4-2-11-2-10 2s10 2 10 7-7 5-12 3" fill="none" stroke="#fff" stroke-width="3.400"/></svg>
    <div class="imebar">
      <span class="imea">A</span>
      <svg width="10" height="14" viewBox="0 0 10 14"><circle cx="3" cy="4" r="1.500" fill="#2576c8"/><path d="M7 7c1 2 0 4-2 5" fill="none" stroke="#2576c8" stroke-width="2"/></svg>
      <svg width="16" height="16" viewBox="0 0 16 16"><circle cx="8" cy="8" r="7" fill="#fff" stroke="#2576c8" stroke-width="1.500"/><path d="M5.500 5.500v2M10.500 5.500v2M4.500 10c2 2 5 2 7 0" fill="none" stroke="#2576c8" stroke-width="1.300"/></svg>
      <svg width="14" height="18" viewBox="0 0 14 18"><rect x="4" y="1" width="6" height="11" rx="3" fill="#2576c8"/><path d="M2 8c0 7 10 7 10 0M7 14v3" fill="none" stroke="#2576c8" stroke-width="1.400"/></svg>
      <svg width="16" height="14" viewBox="0 0 16 14"><rect width="16" height="13" rx="2" fill="#2576c8"/><path d="M2 4h12M2 7h12" stroke="#fff" stroke-dasharray="1.500 1"/><path d="M4 10h8" stroke="#fff"/></svg>
      <svg width="18" height="17" viewBox="0 0 18 17"><circle cx="8" cy="4" r="3.500" fill="#c2ccd8"/><path d="M1 16c0-5 3-7 7-7s7 2 7 7z" fill="#c2ccd8"/><text x="7" y="15" font-size="7" font-family="Liberation Sans" fill="#fff">27</text></svg>
      <svg width="16" height="16" viewBox="0 0 16 16"><path d="M5 1L1 4l2 3 1-1v9h8V6l1 1 2-3-4-3c-1 2-5 2-6 0z" fill="#2576c8"/></svg>
      <svg width="16" height="16" viewBox="0 0 16 16"><path d="M2 14L8 7c-1-3 2-6 6-5l-3 3 1 2 2 .5 1-3c1 4-2 6-5 6l-5 5z" fill="#2576c8"/></svg>
    </div>
  </div>
</div>

<style>
  :global(body) {
    margin: 0;
    background: #f0f0f0;
  }

  .app {
    position: relative;
    width: 1366px;
    height: 768px;
    overflow: hidden;
    display: flex;
    flex-direction: column;
    background: #f0f0f0;
    color: #1a1a1a;
    font: 12px/16px "Liberation Sans", "Noto Sans CJK SC", sans-serif;
  }
  .m {
    font-family: "Liberation Mono", monospace;
    font-size: 11px;
    letter-spacing: -0.6px;
  }

  /* title + menu */
  .title {
    height: 24px;
    flex: none;
    display: flex;
    align-items: center;
    background: #fff;
    padding-left: 5px;
  }
  .appico { width: 15px; height: 15px; margin-right: 2px; }
  .title-text { white-space: nowrap; font-size: 12px; letter-spacing: 0.12px; }
  .title-path { letter-spacing: 0.48px; }
  .winbtns { margin-left: auto; display: flex; margin-right: 3px; }

  .menubar {
    height: 28px;
    flex: none;
    display: flex;
    align-items: center;
    padding-left: 2px;
    white-space: nowrap;
  }
  .menu { padding: 0 5.1px; }
  .menu-change { display: flex; align-items: center; margin-left: 3px; }
  .menu-change span { margin-left: 4px; }
  .menu-change .caret { margin-left: 6px; }
  .menu-blank { flex: none; width: 198px; height: 25px; margin-left: auto; }
  .acct {
    height: 26px;
    width: 270px;
    background: #f5f5f5;
    display: flex;
    align-items: center;
    padding-left: 1px;
    box-sizing: border-box;
  }
  .phone { margin-left: 4px; letter-spacing: 0.25px; }
  .acct .caret { margin-left: 7px; }
  .beans { margin-left: 8px; }
  .bell { width: 14px; height: 18px; margin-left: 9px; }
  .chat { width: 16px; height: 18px; margin: 0 4px 0 7px; }

  /* toolbars */
  .tbrow {
    display: flex;
    flex: none;
    height: 26px;
    white-space: nowrap;
  }
  .tbrow.tb2 { margin-bottom: 2px; }
  .tbrow.tb2 .cell { padding-top: 1px; }
  .tbrow.tb3 { margin-bottom: 2px; }
  .tbrow.tb4 { height: 28px; margin-bottom: 1px; }
  .tbrow.tb4 .cell { padding-top: 1px; }
  .tbrow.tb5 { margin: 2px 0 0; }
  .tbrow.top { margin-bottom: 2px; }
  .tbrow.tb6 { height: 20px; margin: 7px 0 5px; }
  .bar {
    display: flex;
    align-items: center;
    box-sizing: border-box;
    background: linear-gradient(#fbfbfb, #f3f3f3);
    flex: none;
  }
  .tb4 .bar { height: 28px; }
  .bar.white { background: #fff; }
  .cell {
    flex: none;
    display: inline-flex;
    align-items: center;
    height: 100%;
    box-sizing: border-box;
  }
  .item.off { color: #a2a2a2; }
  .item.off .ico { opacity: 0.85; }
  .item.soft { color: #666; }
  .tbrow .item.on {
    height: 23px;
    padding-top: 0;
    padding-left: 3px;
    background: #dbeaf7;
    border: 1px solid #0a78d0;
  }
  .ico { width: 16px; height: 16px; flex: none; }
  .lbl { margin-left: 4px; }
  .item:not(:has(.ico)) .lbl { margin-left: 0; }
  .sep {
    display: block;
    width: 1px;
    height: 18px;
    background: #b8b8b8;
  }
  .caret {
    display: inline-block;
    width: 0;
    height: 0;
    flex: none;
    border: 3px solid transparent;
    border-top: 3px solid #222;
    border-bottom: 0;
  }
  .more { font-size: 13px; line-height: 14px; align-items: flex-start; padding-top: 2px; }
  .grip {
    display: block;
    width: 3px;
    height: 18px;
    background: radial-gradient(circle, #aaa 1px, transparent 1.2px) 0 0 / 3px 4px;
  }
  .check {
    display: block;
    width: 10px;
    height: 10px;
    background: #fff;
    border: 1px solid #888;
  }
  .combo {
    display: flex;
    align-items: center;
    justify-content: space-between;
    height: 22px;
    background: linear-gradient(to left, #f3f3f3 14px, #fff 14px);
    padding: 0 2px;
    box-sizing: border-box;
  }
  .combo .caret { margin-right: 2px; }
  .spin {
    display: flex;
    align-items: center;
    justify-content: flex-end;
    height: 21px;
    background: #fff;
    border: 1px solid #7a7a7a;
    box-sizing: border-box;
    color: #777;
    padding-right: 3px;
  }
  .spin > span { margin-right: 6px; }
  .arrows {
    display: block;
    width: 7px;
    height: 13px;
    background:
      linear-gradient(45deg, transparent 50%, #555 50%) 0 0 / 4px 3px no-repeat,
      linear-gradient(-45deg, transparent 50%, #555 50%) 3px 0 / 4px 3px no-repeat,
      linear-gradient(135deg, transparent 50%, #555 50%) 0 10px / 4px 3px no-repeat,
      linear-gradient(-135deg, transparent 50%, #555 50%) 3px 10px / 4px 3px no-repeat;
  }

  /* main frame */
  .main {
    height: 628px;
    flex: none;
    display: flex;
  }

  .nav {
    width: 162px;
    flex: none;
    display: flex;
    flex-direction: column;
    box-sizing: border-box;
    padding-bottom: 4px;
  }
  .panehead {
    height: 15px;
    flex: none;
    margin-top: 1px;
    display: flex;
    align-items: center;
    font-size: 13px;
    line-height: 15px;
    letter-spacing: 0.6px;
    background: #f0f0f0;
    box-shadow: inset 0 0 0 1px #8a8a8a;
    padding-left: 1px;
  }
  .panehead.blue {
    background: #0a60e0;
    color: #fff;
    box-shadow: none;
    padding-left: 0;
  }
  .pin { margin-left: auto; width: 9px; height: 11px; margin-right: 11px; flex: none; }
  .x { width: 8px; height: 8px; margin-right: 6px; flex: none; }
  .navbtn {
    display: block;
    width: 160px;
    margin: 0 1px;
    padding: 0;
    flex: none;
    height: 21px;
    border: 1px solid #a5a5a5;
    background: #f0f0f0;
    font: inherit;
    color: #222;
    text-align: center;
  }
  .navbtn.first { margin-top: 3px; margin-bottom: 1px; }
  .navbtn.b1 { margin-top: 1px; margin-bottom: 1px; }
  .expbar {
    height: 27px;
    flex: none;
    margin: 1px 1px 0;
    display: flex;
    align-items: center;
    gap: 6px;
    padding-left: 6px;
    background: linear-gradient(#fcfcfc, #f2f2f2);
  }
  .tree {
    flex: 1;
    margin: 0 2px 0 2px;
    border: 1px solid #999;
    background: #fff;
    overflow: hidden;
    padding-top: 1px;
    min-height: 0;
  }
  .node, .kid {
    height: 16px;
    display: flex;
    align-items: center;
    white-space: nowrap;
  }
  .chev { width: 10px; height: 10px; margin-left: 6px; flex: none; }
  .hdots { width: 7px; border-top: 1px dotted #777; flex: none; }
  .folder { width: 16px; height: 13px; flex: none; }
  .nname { margin-left: 5px; }
  .bk { width: 15px; height: 16px; flex: none; margin-left: 1px; }
  .bk.wide { margin-left: 5px; }
  .new {
    font: italic 700 9px/9px "Liberation Sans", sans-serif;
    background: #ffec3c;
    color: #3a3000;
    align-self: flex-start;
    padding: 0 1px;
    margin-left: 1px;
  }
  .kids {
    margin-left: 12px;
    padding-left: 18px;
    border-left: 1px dotted #888;
  }
  .elbow {
    position: relative;
    display: block;
    width: 11px;
    height: 16px;
    flex: none;
  }
  .elbow::before {
    content: '';
    position: absolute;
    left: 0;
    top: 0;
    height: 16px;
    border-left: 1px dotted #777;
  }
  .elbow.last::before { height: 8px; }
  .elbow::after {
    content: '';
    position: absolute;
    left: 0;
    top: 8px;
    width: 11px;
    border-top: 1px dotted #777;
  }
  .kid-in {
    display: flex;
    align-items: center;
    height: 16px;
  }
  .kid-in.sel { background: #d5d5d5; }
  .kidico { width: 15px; height: 15px; margin-left: 1px; flex: none; }
  .kname { margin-left: 5px; padding-right: 1px; }

  /* component list */
  .list {
    width: 165px;
    margin-left: 3px;
    flex: none;
    display: flex;
    flex-direction: column;
    box-sizing: border-box;
    padding-bottom: 2px;
  }
  .listtools {
    height: 28px;
    flex: none;
    display: flex;
    align-items: center;
    padding-left: 5px;
    background: linear-gradient(#fbfbfb, #f3f3f3);
  }
  .listtools > span:first-of-type { margin-left: 4px; }
  .listtools .caret { margin-left: 4px; }
  .xd { margin-left: 7px; display: flex; }
  .dp { margin-left: 8px; display: flex; }
  .searchrow {
    height: 25px;
    flex: none;
    display: flex;
    align-items: center;
  }
  .search {
    width: 137px;
    height: 23px;
    margin-left: 2px;
    box-sizing: border-box;
    border: 1px solid #888;
    background: #fff;
    color: #888;
    padding: 2px 0 0 2px;
  }
  .mag { width: 16px; height: 16px; margin-left: 6px; }
  .listbox {
    flex: 1;
    min-height: 0;
    margin-left: 1px;
    border: 1px solid #888;
    border-top-color: #999;
    background: #fff;
    display: flex;
    overflow: hidden;
  }
  .listrows { flex: 1; padding: 1px 0 0 31px; }
  .lrow { height: 16px; display: flex; align-items: center; white-space: nowrap; }
  .lrow:first-child { margin-top: 1px; }
  .lin {
    display: flex;
    align-items: center;
    height: 16px;
    width: 69px;
    box-sizing: border-box;
    padding-left: 3px;
    margin-left: -2px;
  }
  .lin.cur { background: #316ac5; }
  .gear { width: 11px; height: 11px; flex: none; }
  .zd {
    margin-left: 7px;
    font: 11px "Liberation Mono", monospace;
    letter-spacing: -0.6px;
    color: #1c1c1c;
  }
  .vscroll {
    width: 16px;
    margin-right: 1px;
    flex: none;
    display: flex;
    flex-direction: column;
    background: #f0f0f0;
  }
  .vspace { flex: 1; }
  .vthumb { height: 400px; flex: none; background: #c8c8c8; }
  .sarrow { width: 16px; height: 16px; flex: none; }

  /* right work area */
  .work {
    width: 1033px;
    margin-left: 3px;
    flex: none;
    display: flex;
    flex-direction: column;
  }
  .view { height: 308px; flex: none; background: #000; }
  .view svg { display: block; }
  .lower { flex: 1; display: flex; min-height: 0; }
  .dock { width: 12px; flex: none; display: flex; flex-direction: column; padding-top: 8px; box-sizing: border-box; }
  .dockdots {
    display: block;
    flex: 1;
    margin: 1px 1px 0;
    background: radial-gradient(circle, #bbb 0.9px, transparent 1.1px) 0 0 / 4px 4px;
  }
  .lowermain { flex: 1; min-width: 0; display: flex; flex-direction: column; }
  .gridbox {
    flex: none;
    height: 173px;
    width: 1020px;
    box-sizing: border-box;
    border: 1px solid #b5b5b5;
    background: #f0f0f0;
    display: flex;
    flex-direction: column;
  }
  .gridtop { height: 154px; flex: none; display: flex; overflow: hidden; }
  .table {
    width: 1002px;
    flex: none;
    display: grid;
    grid-template-columns: 34px 73px 56px 36px 33px 201px 166px 156px 81px 61px 38px 40px 27px;
    grid-template-rows: 20px 29px 42px 47px 29px;
    background: #fff;
  }
  .hcell {
    display: flex;
    align-items: center;
    justify-content: center;
    box-sizing: border-box;
    border-right: 1px solid #bbb;
    border-bottom: 1px solid #bbb;
    background: linear-gradient(#fff, #efefef);
    white-space: nowrap;
  }
  .hcell.focus {
    background: linear-gradient(#fbd890, #f6bc66);
    color: #6a1a8a;
  }
  .hcell.corner { background: #fff; }
  .tiny { font: 10px "Liberation Mono", monospace; letter-spacing: -0.6px; }
  .rhead {
    display: flex;
    align-items: center;
    justify-content: center;
    box-sizing: border-box;
    border-right: 1px solid #bbb;
    border-bottom: 1px solid #bbb;
    background: linear-gradient(#fff, #eaeaea);
    font-family: "Liberation Mono", monospace;
    font-size: 11px;
  }
  .rhead.cur { background: #ffd68c; color: #6a1a8a; }
  .c {
    display: flex;
    align-items: center;
    box-sizing: border-box;
    padding-left: 2px;
    background: #ccffd5;
    border-right: 1px solid #bbb;
    border-bottom: 1px solid #bbb;
    white-space: nowrap;
    overflow: hidden;
  }
  .rname { padding-left: 2px; border-right: 1px solid #000; }
  .rname.sel { background: #aee8d6; }
  .rname .m { letter-spacing: -0.4px; }
  .c.mid { justify-content: center; padding: 0; }
  .c.fm { letter-spacing: -0.4px; }
  .shape { padding: 0; overflow: visible; }
  .shape svg { display: block; overflow: visible; }
  .shape text {
    font: 10.5px "Liberation Sans", sans-serif;
    fill: #111;
  }
  .gv {
    width: 16px;
    flex: none;
    display: flex;
    flex-direction: column;
    background: #f0f0f0;
  }
  .gthumb { height: 29px; flex: none; background: #cdcdcd; }
  .gh {
    height: 16px;
    flex: none;
    display: flex;
    background: #f0f0f0;
    width: 1000px;
  }
  .hthumb { width: 483px; flex: none; margin-left: 2px; background: #cdcdcd; }

  /* bottom */
  .status {
    height: 19px;
    flex: none;
    display: flex;
    gap: 2px;
    margin-bottom: 1px;
  }
  .st {
    display: flex;
    align-items: center;
    box-sizing: border-box;
    background: #f7f7f7;
    border-right: 1px solid #d2d2d2;
    border-bottom: 1px solid #d2d2d2;
    border-top: 1px solid #d2d2d2;
    padding-left: 2px;
    white-space: nowrap;
  }
  .s1 { width: 148px; }
  .s2 { width: 78px; }
  .s3 { width: 98px; }
  .s4 { width: 48px; }
  .s5 { width: 913px; }
  .s6 { width: 71px; padding-left: 1px; }

  .taskbar {
    height: 40px;
    flex: none;
    display: flex;
    align-items: center;
    background: #061419;
    color: #fff;
  }
  .tstart {
    width: 48px;
    height: 100%;
    flex: none;
    display: flex;
    align-items: center;
    justify-content: center;
    background: #0c1013;
  }
  .tsearch {
    width: 344px;
    height: 100%;
    flex: none;
    box-sizing: border-box;
    padding-left: 9px;
    display: flex;
    align-items: center;
    background: #f2f2f2;
    color: #3c3c3c;
    font-size: 13px;
  }
  .tsearch-t { margin-left: 9px; }
  .tmic { margin-left: auto; margin-right: 15px; }
  .tt { flex: none; display: flex; align-items: center; justify-content: center; height: 100%; }
  .tv { width: 50px; }
  .fan { width: 50px; }
  .tbrowser {
    width: 150px;
    height: 29px;
    flex: none;
    box-sizing: border-box;
    padding-left: 5px;
    display: flex;
    align-items: center;
    background: #3a4246;
    color: #b9bdbf;
  }
  .tbrowser span { margin-left: 4px; }
  .bmag { margin-left: auto; margin-right: 6px; }
  .spiral { width: 53px; }
  .tapp {
    height: 100%;
    flex: none;
    display: flex;
    align-items: center;
    justify-content: center;
    box-sizing: border-box;
    border-bottom: 2px solid #76b9ed;
  }
  .tapp.on { width: 48px; background: #2f393d; }
  .tapp.g { width: 40px; margin-left: 5px; }
  .tscroll {
    width: 17px;
    height: 100%;
    margin-left: 118px;
    flex: none;
    display: flex;
    flex-direction: column;
    align-items: center;
    justify-content: center;
    gap: 3px;
    background: #eee;
  }
  .people { width: 28px; margin-left: 17px; }
  .cpu {
    width: 63px;
    margin-left: 17px;
    flex: none;
    display: flex;
    flex-direction: column;
    align-items: center;
    line-height: 17px;
  }
  .tray {
    margin-left: 9px;
    width: 173px;
    flex: none;
    display: flex;
    align-items: center;
  }
  .tray .t1 { margin-left: 8px; }
  .tray .t2 { margin-left: 10px; }
  .tray .t3 { margin-left: 5px; }
  .tray .t4 { margin-left: 8px; }
  .ta { font-size: 19px; margin-left: 5px; width: 15px; }
  .t5 { margin-left: 11px; }
  .clock {
    width: 72px;
    flex: none;
    display: flex;
    flex-direction: column;
    align-items: center;
    line-height: 19px;
  }
  .notify { margin-left: 13px; display: flex; }

  /* overlays */
  .bubble {
    position: absolute;
    left: 718px;
    top: -27px;
    width: 45px;
    height: 45px;
    border-radius: 50%;
    background: #3aa348;
    box-shadow: 0 2px 4px rgba(0, 0, 0, 0.45);
    display: flex;
    align-items: flex-end;
    justify-content: center;
    color: #fff;
    font-weight: 700;
    font-size: 12px;
  }
  .bubble span { margin-bottom: 3px; }
  .ime {
    position: absolute;
    left: 868px;
    top: 27px;
    display: flex;
    align-items: center;
  }
  .imes { margin-right: -1px; position: relative; z-index: 1; }
  .imebar {
    width: 180px;
    height: 22px;
    box-sizing: border-box;
    background: #fff;
    border: 1px solid #c2d1e0;
    display: flex;
    align-items: center;
    padding-left: 7px;
    color: #2576c8;
  }
  .imea { font-size: 18px; line-height: 20px; width: 12px; }
  .imebar > :nth-child(2) { margin-left: 11px; }
  .imebar > :nth-child(3) { margin-left: 9px; }
  .imebar > :nth-child(4) { margin-left: 7px; }
  .imebar > :nth-child(5) { margin-left: 7px; }
  .imebar > :nth-child(6) { margin-left: 9px; }
  .imebar > :nth-child(7) { margin-left: 1px; }
  .imebar > :nth-child(8) { margin-left: 6px; }
</style>
